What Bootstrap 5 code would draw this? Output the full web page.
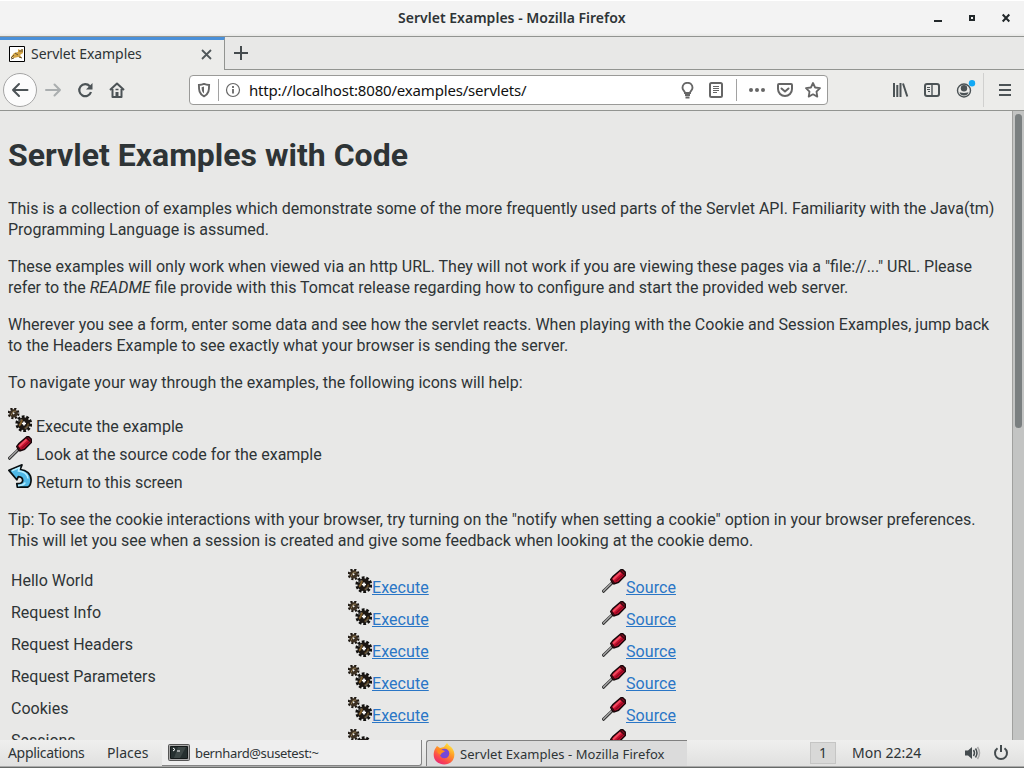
<!DOCTYPE html>
<html lang="en">
<head>
<meta charset="utf-8">
<meta name="viewport" content="width=device-width, initial-scale=1">
<title>Servlet Examples</title>
<link href="https://cdn.jsdelivr.net/npm/bootstrap@5.3.0/dist/css/bootstrap.min.css" rel="stylesheet">
<style>
body{font:15px/20px "Noto Sans","Open Sans",sans-serif;color:#2e3436;background:#e8e8e7;height:768px;width:1024px}
svg{display:block;flex:none}
.titlebar{height:37px;background:linear-gradient(#fff 0 1px,#f3f3f3 1px 33px,#e7e7e5);border-bottom:1px solid #929491}
.win-title{font-weight:600;font-size:14px;letter-spacing:.02px;left:398px;top:8px}
.win-buttons{left:930px;top:9px}
.tabstrip{height:33px}
.tab-current{width:225px;background:#ececea;border-top:3px solid #4a90d9;border-right:1px solid #929491;padding:0 11px 0 9px}
.tab-rest{border-bottom:1px solid #929491;padding-left:8px}
.toolbar-main{height:41px;background:#ececea;border-bottom:1px solid #929491;color:#4c5356}
.nav-icons{width:189px;padding-left:3px}
.back{width:34px;height:34px;border:1px solid #a5a5a5;background:#fcfcfc}
.urlbar{width:639px;height:30px;border:1px solid #9a9a98;border-radius:4px;color:#666;padding:0 6px}
.url{color:#111;font-size:15px;letter-spacing:-.18px;white-space:nowrap;padding-bottom:1px}
.rule{width:1px;height:22px;background:#a2a2a2}
.page{height:629px;font:16px/21px Roboto,sans-serif}
.page-body{width:1012px;padding:23px 8px 0;white-space:nowrap}
.page h1{font-size:32px;line-height:42px;font-weight:700;margin-bottom:22px}
.page p{margin-bottom:16px}
.legend-row{height:28px;gap:4px}
.legend-row svg{margin-top:-1px}
.legend-row span{padding-top:7px}
.examples{margin-top:19px}
.example-row{display:grid;grid-template-columns:337px 254px 1fr;height:32px;padding-left:3px;align-items:start}
.example-row a{color:#2a76c6;display:flex;text-decoration:none}
.example-row a svg{margin-top:-1px}
.example-row a span{padding-top:7px;letter-spacing:.07px;text-decoration:underline;text-decoration-thickness:1px;text-underline-offset:1px}
.scroll{width:12px;background:#c3c4c3;border-left:1px solid #a0a09e;padding:3px 2px}
.thumb{width:7px;height:314px;border-radius:4px;background:#7a7f80}
.panel{height:28px;background:linear-gradient(#efefee,#e0e0df);border-bottom:1px solid #666967;box-shadow:inset 0 -1px #aaa;font-size:14px;line-height:20px;white-space:nowrap}
.panel-item{padding-top:3px}
.task{height:26px;font-size:13px}
.task-term{width:260px;margin-left:13px;background:#eee;border-right:1px solid #858585;border-bottom:1px solid #858585;border-radius:0 0 3px 0;padding-left:6px}
.task-ff{width:261px;margin-left:4px;background:#dbdbdb;border-left:1px solid #808080;border-top:1px solid #808080;border-radius:3px 0 0 0;padding-left:6px}
.workspace{width:26px;height:22px;margin:2px 16px 0 123px;background:#d8d8d7;border:1px solid #c5c5c4;text-align:center}
.t-tab{font-size:14px;letter-spacing:-.06px;margin-left:6px;padding-bottom:2px}
.p-app{letter-spacing:-.33px}
.p-pl{letter-spacing:.05px}
.p-term{letter-spacing:-.36px;padding-top:1px}
.p-ff{letter-spacing:.06px}
</style>
</head>
<body class="overflow-hidden d-flex flex-column">
<svg width="0" height="0" class="position-absolute">
<defs>
<symbol id="gear" viewBox="0 0 24 24">
<g fill="none">
<circle cx="5.6" cy="5.4" r="4.7" stroke="#1c1712" stroke-width="2.4" stroke-dasharray="2.1 1.59"/>
<circle cx="5.6" cy="5.4" r="2.5" stroke="#3c3022" stroke-width="3.4"/>
<path d="M3 7.500 5 3.500 8 3" stroke="#8d7750" stroke-width="1"/>
<circle cx="5.600" cy="5.400" r=".8" fill="#eee"/>
<circle cx="15.800" cy="15.700" r="7" stroke="#11100e" stroke-width="2.800" stroke-dasharray="2.700 1.698"/>
<circle cx="15.800" cy="15.700" r="3.700" stroke="#1c1713" stroke-width="5.400"/>
<path d="M11 17.500q2-1 3-6" stroke="#80602f" stroke-width="2"/>
<path d="M16.500 20.500q3-1 4-5" stroke="#5e4826" stroke-width="1.600"/>
<path d="M10.500 14l3-3m4 10 3-3" stroke="#6b6d6a" stroke-width="1"/>
<path d="M16 13.500v4m-2-2h4" stroke="#fff" stroke-width="1.600"/>
</g></symbol>
<symbol id="driver" viewBox="0 0 24 24">
<path d="M.5 23.200 10.500 13.500" stroke="#2d2d2d" stroke-width="3"/>
<path d="M1 22.500 10.500 13" stroke="#a4a4a4" stroke-width="1.400"/>
<path d="M8.800 10.500 11 7.500 19 .8l1.600-.2 2.600 2.500.1 3.400-6.800 6.800-4.600 1.600-1.400-.9z" fill="#c9102f" stroke="#160609" stroke-width="1.500"/>
<path d="m11 10.500 7.500-7" stroke="#f04c60" stroke-width="1.800"/><path d="m13.500 12.500 8-7" stroke="#8a0820" stroke-width="1.200"/>
<path d="m18.500 1.600 4 4M9.500 10.500l3 3.500" stroke="#3a0b12" stroke-width="1.500"/>
</symbol>
<symbol id="return" viewBox="0 0 24 24">
<path d="M.9 6.400 14 .9 12.200 5.500C18.500 6 23.100 10 23.100 15.700c0 3.200-1.200 6.200-3.200 7.400H9.300l-.5-3.400c4.200.1 6-1.200 5.900-3.500-.1-2-1.700-3.200-4.400-3.500L8.800 15.800z" fill="#4fb8e6" stroke="#090e10" stroke-width="1.700" stroke-linejoin="round"/>
<path d="m3.800 6.700 7.500-3.200-.8 3.500c5.500.5 9 3 9.500 7.500M10 21.600c4 0 6.500-1 7.200-3" fill="none" stroke="#b5edff" stroke-width="1.600"/>
</symbol>
</defs>
</svg>

<header class="titlebar position-relative flex-shrink-0">
<div class="win-title position-absolute text-nowrap">Servlet Examples - Mozilla Firefox</div>
<svg class="win-buttons position-absolute" width="84" height="18" fill="none" stroke="#22282a" stroke-width="2"><path d="M4 12h8M72.700 5.500l6.600 7m0-7-6.600 7"/><path d="M40 7h4v4h-4z"/></svg>
</header>

<div class="tabstrip d-flex flex-shrink-0">
<div class="tab-current d-flex align-items-center">
<svg style="margin-top:-2px" width="16" height="16" viewBox="0 0 16 16"><path d="M.5.500h15v15H.5z" fill="#fff" stroke="#000"/><path d="m2 11 3-4 4-1V3l2 1 3-1v4l-3 2 2 3-4-1-4 1z" fill="#d4a545"/><path d="m2 12 3-3m1-2 3 2m4-6v3m-3-1h2m-2 6 3 1M2 13l3-1" stroke="#675432" fill="none"/></svg>
<span class="t-tab">Servlet Examples</span>
<svg class="ms-auto" style="margin-top:-2px" width="13" height="13" stroke="#50575a" stroke-width="1.800"><path d="m2 2 9 9m0-9-9 9"/></svg>
</div>
<div class="tab-rest flex-grow-1 d-flex align-items-center"><svg width="16" height="16" stroke="#454b4e" stroke-width="2"><path d="M8 1v14M1 8h14"/></svg></div>
</div>

<nav class="toolbar-main d-flex align-items-center flex-shrink-0">
<div class="nav-icons d-flex align-items-center">
<div class="back rounded-circle d-flex align-items-center justify-content-center"><svg width="18" height="16" fill="none" stroke="currentColor" stroke-width="2" stroke-linecap="round" stroke-linejoin="round"><path d="M16.500 8H2m6-6L2 8l6 6"/></svg></div>
<svg class="ms-2" width="17" height="16" fill="none" stroke="#aaaeaf" stroke-width="2" stroke-linecap="round" stroke-linejoin="round"><path d="M1 8h14m-5.500-5.500L15 8l-5.500 5.500"/></svg>
<svg style="margin-left:15px" width="17" height="16" fill="none" stroke="currentColor" stroke-width="2.200"><path d="M12.800 4.200A6 6 0 1 0 14 10"/><path d="M15.500 1v6.500H9z" fill="currentColor" stroke="none"/></svg>
<svg style="margin-left:15px" width="17" height="16" fill="none" stroke="currentColor" stroke-width="2" stroke-linejoin="round"><path d="M1 8 8 1.500 15 8M3.500 7v8h9V7"/><path d="M6.500 15v-5h3v5z" fill="currentColor" stroke="none"/><path d="M6.500 7.500h3" stroke-width="1.500"/></svg>
</div>
<div class="urlbar bg-white d-flex align-items-center">
<svg width="16" height="16" fill="none" stroke="currentColor" stroke-width="1.900"><path d="M8 1.900c2 .8 3.500 1 5.100 1.100 0 5-.2 9-5.100 11.300C3.100 12 2.900 8 2.900 3 4.500 2.900 6 2.700 8 1.900z"/><path d="M8 4.500v7C6 10 5.700 8 5.600 5.200z" fill="currentColor" stroke="none"/></svg>
<div class="rule" style="margin-left:6px"></div>
<svg style="margin-left:6px" width="16" height="16" fill="none" stroke="currentColor"><circle cx="8" cy="8" r="6.500" stroke-width="1.200"/><path d="M8 7v4.500M8 4v2" stroke-width="1.800"/></svg>
<span class="url" style="margin-left:8px">http://localhost:8080/examples/servlets/</span>
<svg class="ms-auto" width="14" height="17" fill="none" stroke="currentColor" stroke-width="1.900"><path d="M5 11C5 9.200 2.500 8.500 2.500 5.800a5 5 0 0 1 10 0c0 2.700-2.500 3.400-2.500 5.200zM5 13h5M5.500 15.500h4"/></svg>
<svg style="margin-left:14px" width="16" height="16" fill="none" stroke="currentColor"><rect x="2" y="1" width="12" height="14" rx="1.500" stroke-width="2"/><path d="M5 4.500h6M5 6.500h6M5 8.500h6M5 10.500h4"/></svg>
<div class="rule" style="margin-left:12px"></div>
<svg style="margin-left:11px" width="18" height="16" fill="currentColor"><circle cx="3" cy="8" r="2"/><circle cx="9" cy="8" r="2"/><circle cx="15" cy="8" r="2"/></svg>
<svg style="margin-left:11px" width="16" height="16" fill="none" stroke="currentColor" stroke-width="2" stroke-linecap="round" stroke-linejoin="round"><path d="M2 2h12q1 0 1 1v4a7 7 0 0 1-14 0V3q0-1 1-1zM4.500 6.500 8 9.500l3.500-3"/></svg>
<svg style="margin-left:12px" width="16" height="16" fill="none" stroke="currentColor" stroke-width="1.800" stroke-linejoin="round"><path d="m8 1 2.100 4.500 4.900.7-3.500 3.500.8 4.900L8 12.300l-4.300 2.300.8-4.900L1 6.200l4.900-.7z"/></svg>
</div>
<div class="d-flex align-items-center" style="margin-left:64px">
<svg width="17" height="16" fill="none" stroke="currentColor" stroke-width="2"><path d="M2 1v14M5.300 3v12M8.500 1v14M11 1.500l4.300 13"/></svg>
<svg style="margin-left:15px" width="16" height="16" fill="none" stroke="currentColor"><rect x="1" y="2" width="14" height="12" rx="2" stroke-width="2"/><path d="M8 2v12" stroke-width="1.400"/><path d="M3 5.500h3M3 7.500h3M4 9.500h2"/></svg>
<svg style="margin-left:16px" width="20" height="22"><circle cx="8" cy="11.500" r="6.500" fill="none" stroke="currentColor" stroke-width="1.400"/><circle cx="8" cy="9.300" r="3.200" fill="currentColor"/><path d="M3.500 13.200q4.500 1.500 9 0-1 3.300-4.500 3.300t-4.500-3.300z" fill="currentColor"/><circle cx="16" cy="4.300" r="3.200" fill="#13a9f5"/></svg>
<div style="width:1px;height:34px;background:#d0d0cf;margin-left:7px"></div>
<svg style="margin-left:14px" width="14" height="14" stroke="currentColor" stroke-width="2"><path d="M1 2h12M1 7h12M1 12h12"/></svg>
</div>
</nav>

<main class="page d-flex overflow-hidden flex-shrink-0">
<div class="page-body">
<h1>Servlet Examples with Code</h1>
<p>This is a collection of examples which demonstrate some of the more frequently used parts of the Servlet API. Familiarity with the Java(tm)<br>Programming Language is assumed.</p>
<p>These examples will only work when viewed via an http URL. They will not work if you are viewing these pages via a "file://..." URL. Please<br>refer to the <em>README</em> file provide with this Tomcat release regarding how to configure and start the provided web server.</p>
<p>Wherever you see a form, enter some data and see how the servlet reacts. When playing with the Cookie and Session Examples, jump back<br>to the Headers Example to see exactly what your browser is sending the server.</p>
<p>To navigate your way through the examples, the following icons will help:</p>
<div class="mb-3">
<div class="legend-row d-flex"><svg width="24" height="24"><use href="#gear"/></svg><span>Execute the example</span></div>
<div class="legend-row d-flex"><svg width="24" height="24"><use href="#driver"/></svg><span>Look at the source code for the example</span></div>
<div class="legend-row d-flex"><svg width="24" height="24"><use href="#return"/></svg><span>Return to this screen</span></div>
</div>
<p class="mb-0">Tip: To see the cookie interactions with your browser, try turning on the "notify when setting a cookie" option in your browser preferences.<br>This will let you see when a session is created and give some feedback when looking at the cookie demo.</p>
<div class="examples">
<div class="example-row"><span>Hello World</span><a href="#"><svg width="24" height="24"><use href="#gear"/></svg><span>Execute</span></a><a href="#"><svg width="24" height="24"><use href="#driver"/></svg><span>Source</span></a></div>
<div class="example-row"><span>Request Info</span><a href="#"><svg width="24" height="24"><use href="#gear"/></svg><span>Execute</span></a><a href="#"><svg width="24" height="24"><use href="#driver"/></svg><span>Source</span></a></div>
<div class="example-row"><span>Request Headers</span><a href="#"><svg width="24" height="24"><use href="#gear"/></svg><span>Execute</span></a><a href="#"><svg width="24" height="24"><use href="#driver"/></svg><span>Source</span></a></div>
<div class="example-row"><span>Request Parameters</span><a href="#"><svg width="24" height="24"><use href="#gear"/></svg><span>Execute</span></a><a href="#"><svg width="24" height="24"><use href="#driver"/></svg><span>Source</span></a></div>
<div class="example-row"><span>Cookies</span><a href="#"><svg width="24" height="24"><use href="#gear"/></svg><span>Execute</span></a><a href="#"><svg width="24" height="24"><use href="#driver"/></svg><span>Source</span></a></div>
<div class="example-row"><span>Sessions</span><a href="#"><svg width="24" height="24"><use href="#gear"/></svg></a><a href="#"><svg width="24" height="24"><use href="#driver"/></svg></a></div>
</div>
</div>
<div class="scroll"><div class="thumb"></div></div>
</main>

<footer class="panel d-flex flex-shrink-0">
<span class="panel-item" style="margin-left:8px;width:99px"><span class="p-app">Applications</span></span>
<span class="panel-item" style="width:42px"><span class="p-pl">Places</span></span>
<div class="task task-term d-flex align-items-center"><svg width="22" height="17"><rect x=".5" y=".5" width="21" height="16" rx="1" fill="#aaa" stroke="#555"/><path d="M2.500 2.500h17v12h-17z" fill="#263030" stroke="#131818"/><path d="m10 3-4 11h6l6-11z" fill="#3d4746"/><path d="m5 4 2 1.500L5 7m4 0h3" stroke="#fff" fill="none"/></svg><span class="p-term" style="margin-left:5px">bernhard@susetest:~</span></div>
<div class="task task-ff d-flex align-items-center"><svg width="22" height="22" viewBox="0 0 22 22"><defs><linearGradient id="ff" x1="0.800" y1="0" x2="0.200" y2="1"><stop offset="0" stop-color="#fff044"/><stop offset=".4" stop-color="#ff9825"/><stop offset=".75" stop-color="#fb4550"/><stop offset="1" stop-color="#e4267b"/></linearGradient></defs><path d="M2 6 4 3l3 2 4-1 3-4c1 2 3 3 4 4l1 1c3 4 3 8 1 12-3 5-11 6-16 2-4-3-4-9-2-13z" fill="url(#ff)"/><circle cx="11.500" cy="10.500" r="4.800" fill="#7647d7"/><path d="M4 6c3-1 4 1 8 2-1 2-4 1-4 4-3-1-4-3-4-6z" fill="#ff8a20"/></svg><span class="p-ff" style="margin-left:5px">Servlet Examples - Mozilla Firefox</span></div>
<div class="workspace">1</div>
<span class="panel-item"><span>Mon 22:24</span></span>
<svg style="margin:6px 0 0 43px" width="18" height="14" fill="#444b4e"><path d="M1 4.500h3L8 1v12L4 9.500H1z"/><path d="M9.500 4q2 3 0 6M11.500 2.500q3 4.500 0 9" fill="none" stroke="#444b4e" stroke-width="1.500"/><path d="M13.500 1q4 6 0 12" fill="none" stroke="#aaa" stroke-width="1.500"/></svg>
<svg style="margin:5px 0 0 11px" width="16" height="16" fill="none" stroke="#444b4e" stroke-width="2"><path d="M4.500 3.200a6 6 0 1 0 7 0M8 0v7"/></svg>
</footer>
</body>
</html>
